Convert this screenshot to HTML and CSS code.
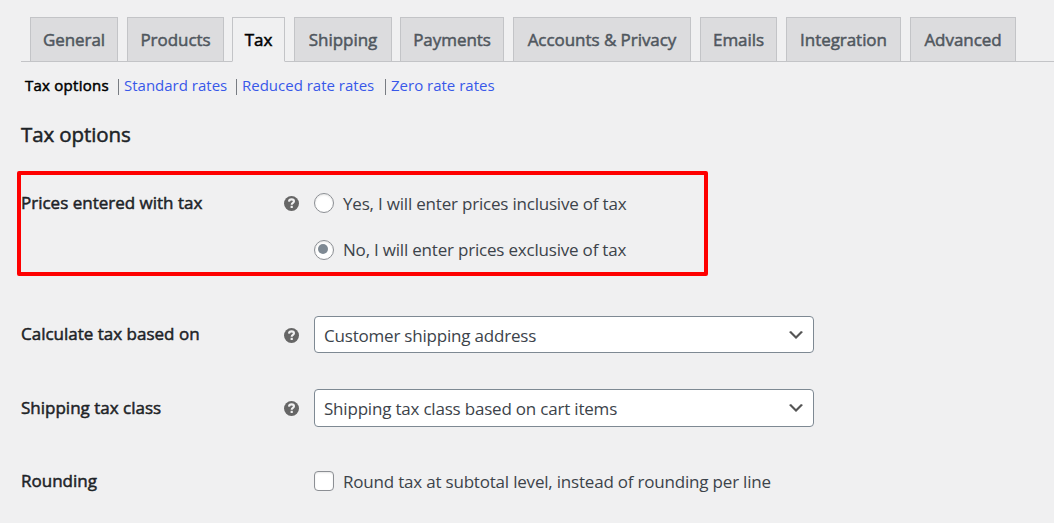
FILE: index.html
```html
<!DOCTYPE html>
<html lang="en">
<head>
    <meta charset="UTF-8">
    <meta name="viewport" content="width=device-width, initial-scale=1.0">
    <title>Tax options</title>
    <link rel="stylesheet" href="styles.css">
</head>
<body>

<!-- Icons -->
<svg class="sprite" width="0" height="0">
    <symbol id="help" viewBox="0 0 15 15">
        <circle cx="7.5" cy="7.5" r="7.5" fill="#666"/>
        <path d="M5 5.6C5.1 4 6.2 3.4 7.6 3.4c1.5 0 2.4.7 2.4 1.9 0 1.6-2.3 1.6-2.3 3.4" fill="none" stroke="#f0f0f1" stroke-width="2.1"/>
        <rect x="6.6" y="9.8" width="2.2" height="2.2" fill="#f0f0f1"/>
    </symbol>
    <symbol id="chevron" viewBox="0 0 20 20">
        <path d="M5 6l5 5 5-5 2 1-7 7-7-7 2-1z" fill="#555"/>
    </symbol>
</svg>

<nav class="tabs">
    <a class="tab general">General</a>
    <a class="tab products">Products</a>
    <a class="tab tax active">Tax</a>
    <a class="tab shipping">Shipping</a>
    <a class="tab payments">Payments</a>
    <a class="tab accounts">Accounts &amp; Privacy</a>
    <a class="tab emails">Emails</a>
    <a class="tab integration">Integration</a>
    <a class="tab advanced">Advanced</a>
</nav>

<ul class="subnav">
    <li class="current"><a>Tax options</a></li>
    <li class="standard"><a>Standard rates</a></li>
    <li class="reduced"><a>Reduced rate rates</a></li>
    <li class="zero"><a>Zero rate rates</a></li>
</ul>

<h2>Tax options</h2>

<div class="form">
    <div class="row prices">
        <div class="label">Prices entered with tax</div>
        <svg class="help"><use href="#help"/></svg>
        <div class="options">
            <label class="option yes"><input type="radio" name="prices"><span>Yes, I will enter prices inclusive of tax</span></label>
            <label class="option no"><input type="radio" name="prices" checked><span>No, I will enter prices exclusive of tax</span></label>
        </div>
        <div class="highlight"></div>
    </div>

    <div class="row based">
        <div class="label">Calculate tax based on</div>
        <svg class="help"><use href="#help"/></svg>
        <div class="select"><span>Customer shipping address</span><svg class="chevron"><use href="#chevron"/></svg></div>
    </div>

    <div class="row class">
        <div class="label">Shipping tax class</div>
        <svg class="help"><use href="#help"/></svg>
        <div class="select"><span>Shipping tax class based on cart items</span><svg class="chevron"><use href="#chevron"/></svg></div>
    </div>

    <div class="row rounding">
        <div class="label">Rounding</div>
        <label class="option round"><input type="checkbox"><span>Round tax at subtotal level, instead of rounding per line</span></label>
    </div>
</div>

</body>
</html>
```

FILE: styles.css
```css
* {
    box-sizing: border-box;
}
body {
    margin: 0;
    padding: 17px 0 0 21px;
    height: 523px;
    overflow: hidden;
    background-color: #f0f0f1;
    color: #3c434a;
    font-family: "Open Sans", "Noto Sans", sans-serif;
    font-size: 17px;
    line-height: 24px;
}
.sprite {
    position: absolute;
}
.tabs {
    display: flex;
    height: 45px;
    padding-left: 9px;
    border-bottom: 1px solid #c3c4c7;
}
.tab {
    height: 45px;
    margin-right: 9px;
    border: 1px solid #c3c4c7;
    background-color: #dcdcde;
    color: #50575e;
    font-size: 17px;
    line-height: 44px;
    text-align: center;
    white-space: nowrap;
    letter-spacing: -0.05px;
}
/* medium weight */
.tab, .label, h2, .subnav .current a {
    font-weight: 400;
    -webkit-text-stroke: 0.5px currentColor;
}
.tab.active {
    background-color: #f0f0f1;
    border-bottom-color: #f0f0f1;
    color: #000;
}
.general { width: 88px; }
.products { width: 97px; margin-right: 8px; }
.tax { width: 53px; }
.shipping { width: 98px; margin-right: 8px; }
.payments { width: 104px; }
.accounts { width: 178px; }
.emails { width: 77px; }
.integration { width: 115px; }
.advanced { width: 106px; }

.subnav {
    display: flex;
    margin: 11px 0 0;
    padding: 0 0 0 4px;
    list-style: none;
    font-size: 15px;
    color: #646970;
    white-space: nowrap;
}
.subnav li {
    height: 24px;
}
.subnav li + li::before {
    content: "";
    display: inline-block;
    width: 1px;
    height: 16px;
    margin-right: 5px;
    background-color: #787c82;
    vertical-align: -4px;
}
.subnav a {
    color: #3858e9;
}
.subnav .current a {
    color: #000;
    letter-spacing: 0.25px;
}
.current { width: 93px; }
.standard { width: 118px; }
.reduced { width: 149px; }

h2 {
    margin: 22px 0 0;
    height: 29px;
    color: #1d2327;
    font-size: 20.5px;
    line-height: 30px;
    letter-spacing: -0.1px;
}

.row {
    display: grid;
    grid-template-columns: 263px 30px 1fr;
    position: relative;
    white-space: nowrap;
}
.label {
    color: #1d2327;
    font-size: 17px;
}
.help {
    width: 15px;
    height: 15px;
    margin-top: 5px;
}
.prices {
    margin-top: 43px;
    height: 125px;
}
.highlight {
    position: absolute;
    left: -4px;
    top: -20px;
    width: 691px;
    height: 105px;
    border: 4px solid #fe0000;
    border-radius: 2px;
}
.based {
    height: 73px;
}
.class {
    height: 80px;
}
.based .label {
    padding-top: 6px;
}
.class .label {
    padding-top: 7px;
}
.based .help, .class .help {
    margin-top: 12px;
}

.option {
    display: flex;
    height: 47px;
}
.round {
    grid-column: 3;
}
.option span {
    padding: 1px 0 0 9px;
}
.no span {
    padding-top: 0;
}
.option input {
    appearance: none;
    flex: none;
    width: 20px;
    height: 20px;
    margin: 2px 0 0;
    border: 1px solid #8c8f94;
    border-radius: 4px;
    background-color: #fff;
    box-shadow: inset 0 1px 2px rgba(0, 0, 0, 0.1);
}
.option input[type="radio"] {
    display: flex;
    border-radius: 50%;
}
.option input[type="radio"]:checked::before {
    content: "";
    width: 10px;
    height: 10px;
    margin: 3px;
    border-radius: 50%;
    background-color: #7e8993;
}

.select {
    display: flex;
    justify-content: space-between;
    width: 500px;
    height: 37px;
    padding: 0 7px 0 9px;
    border: 1px solid #7e8993;
    border-radius: 4px;
    background-color: #fff;
    line-height: 37px;
}
.class .select {
    height: 38px;
}
.chevron {
    width: 20px;
    height: 20px;
    margin-top: 8px;
}
.option span, .select span {
    letter-spacing: -0.2px;
}
```
